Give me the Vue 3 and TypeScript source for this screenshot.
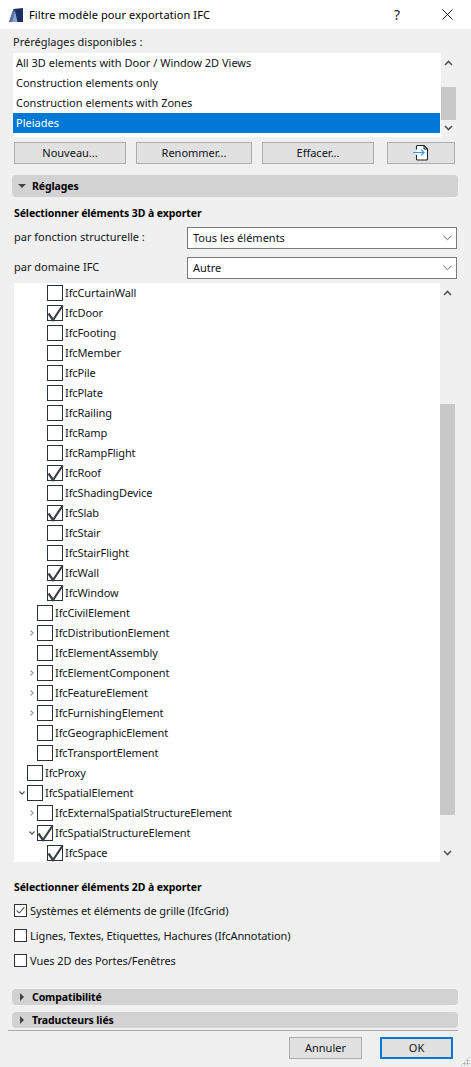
<script setup lang="ts">
interface Row { name: string; level: number; checked?: boolean; arrow?: 'right' | 'down' }
const presets = ['All 3D elements with Door / Window 2D Views', 'Construction elements only', 'Construction elements with Zones', 'Pleiades']
const l3 = (name: string, checked = false): Row => ({ name, level: 3, checked })
const l2 = (name: string, arrow?: 'right' | 'down', checked = false): Row => ({ name, level: 2, arrow, checked })
const rows: Row[] = [
  l3('IfcCurtainWall'), l3('IfcDoor', true), l3('IfcFooting'), l3('IfcMember'), l3('IfcPile'), l3('IfcPlate'),
  l3('IfcRailing'), l3('IfcRamp'), l3('IfcRampFlight'), l3('IfcRoof', true), l3('IfcShadingDevice'), l3('IfcSlab', true),
  l3('IfcStair'), l3('IfcStairFlight'), l3('IfcWall', true), l3('IfcWindow', true),
  l2('IfcCivilElement'), l2('IfcDistributionElement', 'right'), l2('IfcElementAssembly'), l2('IfcElementComponent', 'right'),
  l2('IfcFeatureElement', 'right'), l2('IfcFurnishingElement', 'right'), l2('IfcGeographicElement'), l2('IfcTransportElement'),
  { name: 'IfcProxy', level: 1 }, { name: 'IfcSpatialElement', level: 1, arrow: 'down' },
  l2('IfcExternalSpatialStructureElement', 'right'), l2('IfcSpatialStructureElement', 'down', true), l3('IfcSpace', true),
]
const options2d = [
  { label: 'Systèmes et éléments de grille (IfcGrid)', checked: true },
  { label: 'Lignes, Textes, Etiquettes, Hachures (IfcAnnotation)', checked: false },
  { label: 'Vues 2D des Portes/Fenêtres', checked: false },
]
</script>

<template>
  <div class="dialog">
    <header class="titlebar">
      <svg class="logo" viewBox="0 0 14 14">
        <polygon points="0,14 4.500,1 14,0 14,14" fill="#1c2f63" />
        <polygon points="0,14 4.500,1 6,3 3,14" fill="#5c74ad" />
        <polygon points="3,14 6,3 8.500,14" fill="#8fa3cc" />
      </svg>
      <span class="title">Filtre modèle pour exportation IFC</span>
      <span class="help">?</span>
      <svg class="close" viewBox="0 0 11 11"><path d="M0.5 0.5L10.5 10.5M10.5 0.5L0.5 10.5" stroke="#222" stroke-width="1" fill="none" /></svg>
    </header>

    <div class="label-presets">Préréglages disponibles :</div>
    <div class="presets">
      <ul class="preset-list">
        <li v-for="(p, i) in presets" :key="p" :class="['preset', { selected: i === 3 }]">{{ p }}</li>
      </ul>
      <div class="sb sb-presets">
        <svg class="chev" viewBox="0 0 9 6"><path d="M1 5L4.500 1.500L8 5" /></svg>
        <div class="thumb thumb-presets"></div>
        <svg class="chev" viewBox="0 0 9 6"><path d="M1 1L4.500 4.500L8 1" /></svg>
      </div>
    </div>

    <div class="actions">
      <button class="btn b1">Nouveau...</button>
      <button class="btn b2">Renommer...</button>
      <button class="btn b3">Effacer...</button>
      <button class="btn b4">
        <svg class="export" viewBox="0 0 16 16">
          <path d="M3.500 4.500V1.500A1 1 0 0 1 4.500 .5H11L14.500 4V14A1 1 0 0 1 13.500 15H4.500A1 1 0 0 1 3.500 14V10" fill="#fff" stroke="#1b2530" stroke-width="1.100" />
          <path d="M11 .5V4H14.500" fill="none" stroke="#1b2530" />
          <path d="M0 7.500H11M8 4.500L11 7.500L8 10.500" fill="none" stroke="#3f96ee" stroke-width="1.200" />
        </svg>
      </button>
    </div>

    <div class="bar bar-main"><i class="tri down"></i><span>Réglages</span></div>

    <div class="heading h3d">Sélectionner éléments 3D à exporter</div>
    <div class="field f1">
      <span class="field-label">par fonction structurelle :</span>
      <div class="select"><span>Tous les éléments</span><svg class="sel-chev" viewBox="0 0 10 6"><path d="M.5 .5L5 5L9.500 .5" /></svg></div>
    </div>
    <div class="field f2">
      <span class="field-label">par domaine IFC</span>
      <div class="select"><span>Autre</span><svg class="sel-chev" viewBox="0 0 10 6"><path d="M.5 .5L5 5L9.500 .5" /></svg></div>
    </div>

    <div class="tree-wrap">
      <div class="tree">
        <div v-for="r in rows" :key="r.name" :class="['row', 'lvl' + r.level]">
          <span class="arrow">
            <svg v-if="r.arrow === 'right'" viewBox="0 0 4 6" class="ar ar-r"><path d="M.5 .5L3.200 3L.5 5.500" /></svg>
            <svg v-else-if="r.arrow === 'down'" viewBox="0 0 6 4" class="ar ar-d"><path d="M.5 .5L3 3.200L5.500 .5" /></svg>
          </span>
          <span class="cb">
            <svg v-if="r.checked" class="tick" viewBox="0 0 17 17"><path d="M1.500 8.500L6 15L15.700 .5" /></svg>
          </span>
          <span class="row-text">{{ r.name }}</span>
        </div>
      </div>
      <div class="sb sb-tree">
        <svg class="chev" viewBox="0 0 9 6"><path d="M1 5L4.500 1.500L8 5" /></svg>
        <div class="thumb thumb-tree"></div>
        <svg class="chev chev-bottom" viewBox="0 0 9 6"><path d="M1 1L4.500 4.500L8 1" /></svg>
      </div>
    </div>

    <div class="heading h2d">Sélectionner éléments 2D à exporter</div>
    <label v-for="o in options2d" :key="o.label" class="opt">
      <span class="cb2">
        <svg v-if="o.checked" viewBox="0 0 13 13"><path d="M2 6.500L5 9.500L11 2.500" /></svg>
      </span>
      <span>{{ o.label }}</span>
    </label>

    <div class="bar bar-small b-compat"><i class="tri right"></i><span>Compatibilité</span></div>
    <div class="bar bar-small b-trad"><i class="tri right"></i><span>Traducteurs liés</span></div>
    <div class="sep"></div>
    <footer class="footer">
      <button class="btn cancel">Annuler</button>
      <button class="btn ok">OK</button>
    </footer>
    <div class="grip"></div>
  </div>
</template>

<style>
html, body { margin: 0; background: #f0f0f0; }
</style>

<style scoped>
.dialog {
  position: relative;
  width: 471px;
  height: 1067px;
  overflow: hidden;
  background: #f0f0f0;
  color: #101418;
  font-family: "Noto Sans", "Open Sans", sans-serif;
  font-size: 11px;
  letter-spacing: 0;
  line-height: 20px;
}
.titlebar {
  display: flex;
  align-items: center;
  height: 29px;
  background: #fff;
  padding-left: 9px;
  box-sizing: border-box;
}
.logo { width: 14px; height: 14px; margin-right: 6px; }
.title { flex: 1; font-size: 11px; letter-spacing: 0.1px; color: #000; }
.help { font-size: 14px; width: 10px; margin-right: 40px; text-align: center; color: #222; }
.close { width: 11px; height: 11px; margin-right: 18px; }
.label-presets { margin: 3px 0 0 13px; height: 21px; }
.presets { display: flex; margin-left: 13px; height: 84px; }
.preset-list { list-style: none; margin: 0; padding: 0; width: 428px; background: #fff; box-sizing: border-box; }
.preset { height: 20px; padding-left: 3px; padding-right: 1px; }
.preset.selected { background: #0078d7; color: #fff; margin-right: 1px; }
.sb { display: flex; flex-direction: column; align-items: center; width: 15px; box-sizing: border-box; }
.sb-presets { padding-top: 7px; }
.chev { width: 9px; height: 6px; flex: none; }
.chev path { fill: none; stroke: #555; stroke-width: 1.600; }
.thumb { background: #c8c8c8; width: 15px; }
.thumb-presets { height: 33px; margin: 21px 0 5px; }
.actions { display: flex; margin: 5px 0 0 14px; height: 22px; }
.btn {
  box-sizing: border-box;
  height: 22px;
  background: #e1e1e1;
  border: 1px solid #adadad;
  padding: 0;
  font: inherit;
  letter-spacing: inherit;
  color: #101418;
  display: flex;
  align-items: center;
  justify-content: center;
}
.b1 { width: 112px; margin-right: 10px; }
.b2 { width: 116px; margin-right: 10px; }
.b3 { width: 112px; margin-right: 13px; }
.b4 { width: 68px; }
.export { width: 16px; height: 16px; }
.bar {
  display: flex;
  align-items: center;
  margin: 0 13px 0 12px;
  background: #d2d2d2;
  border-radius: 4px;
  font-weight: 700;
  font-size: 10.5px;
  letter-spacing: -0.1px;
  color: #000;
}
.bar-main { margin-top: 11px; height: 22px; }
.bar-small { height: 16px; }
.b-compat { margin-top: 16px; }
.b-trad { margin-top: 7px; }
.tri { width: 0; height: 0; display: block; margin-right: 6px; }
.tri.down { margin-left: 6px; border-left: 4px solid transparent; border-right: 4px solid transparent; border-top: 4px solid #444; }
.tri.right { margin-left: 8px; margin-right: 8px; border-top: 4px solid transparent; border-bottom: 4px solid transparent; border-left: 4px solid #444; }
.heading { margin-left: 14px; font-weight: 700; font-size: 10.5px; letter-spacing: -0.1px; color: #000; }
.h3d { margin-top: 6px; height: 24px; }
.field { display: flex; align-items: center; margin: 0 14px; height: 22px; justify-content: space-between; }
.f2 { margin-top: 8px; }
.field-label { padding-bottom: 2px; }
.select {
  box-sizing: border-box;
  width: 270px;
  height: 22px;
  border: 1px solid #7a7a7a;
  background: #fff;
  display: flex;
  align-items: center;
  justify-content: space-between;
  padding: 0 5px;
}
.sel-chev { width: 9px; height: 6px; margin-right: -1px; }
.sel-chev path { fill: none; stroke: #555; stroke-width: 1; }
.tree-wrap { display: flex; margin: 4px 0 0 14px; height: 579px; }
.tree { width: 426px; background: #fff; overflow: hidden; letter-spacing: -0.1px; }
.row { display: flex; align-items: center; height: 20px; }
.lvl1 { padding-left: 3px; }
.lvl2 { padding-left: 13px; }
.lvl3 { padding-left: 23px; }
.arrow { width: 10px; height: 20px; display: flex; align-items: center; justify-content: center; flex: none; }
.ar { fill: none; stroke: #a0a0a0; stroke-width: 1.200; overflow: visible; }
.ar-r { width: 4px; height: 6px; }
.ar-d { width: 6px; height: 4px; stroke: #555; }
.cb {
  position: relative;
  width: 16px;
  height: 16px;
  box-sizing: border-box;
  border: 1px solid #2b3138;
  background: #fff;
  flex: none;
  margin-right: 2px;
}
.tick { position: absolute; left: -1px; top: -1px; width: 17px; height: 17px; overflow: visible; }
.tick path { fill: none; stroke: #3a4047; stroke-width: 2.200; }
.sb-tree { padding-top: 7px; }
.thumb-tree { height: 411px; margin: 108px 0 0; }
.chev-bottom { margin-top: 35px; }
.h2d { margin-top: 15px; height: 21px; }
.opt { display: flex; align-items: center; height: 25px; margin-left: 14px; letter-spacing: -0.08px; }
.cb2 {
  box-sizing: border-box;
  width: 13px;
  height: 13px;
  border: 1px solid #333;
  background: #fff;
  margin-right: 3px;
  display: block;
}
.cb2 svg { display: block; width: 11px; height: 11px; fill: none; stroke: #555; stroke-width: 1.300; }
.sep { height: 1px; margin: 2px 13px 0 8px; background: #a8a8a8; }
.footer { display: flex; margin: 6px 0 0 289px; }
.cancel { width: 73px; margin-right: 18px; }
.ok { width: 73px; border: 2px solid #0078d7; }
.grip {
  position: absolute;
  right: 1px;
  bottom: 1px;
  width: 10px;
  height: 10px;
  background-image: radial-gradient(#a8a8a8 45%, transparent 50%);
  background-size: 3px 3px;
  clip-path: polygon(100% 0, 100% 100%, 0 100%);
}
</style>
